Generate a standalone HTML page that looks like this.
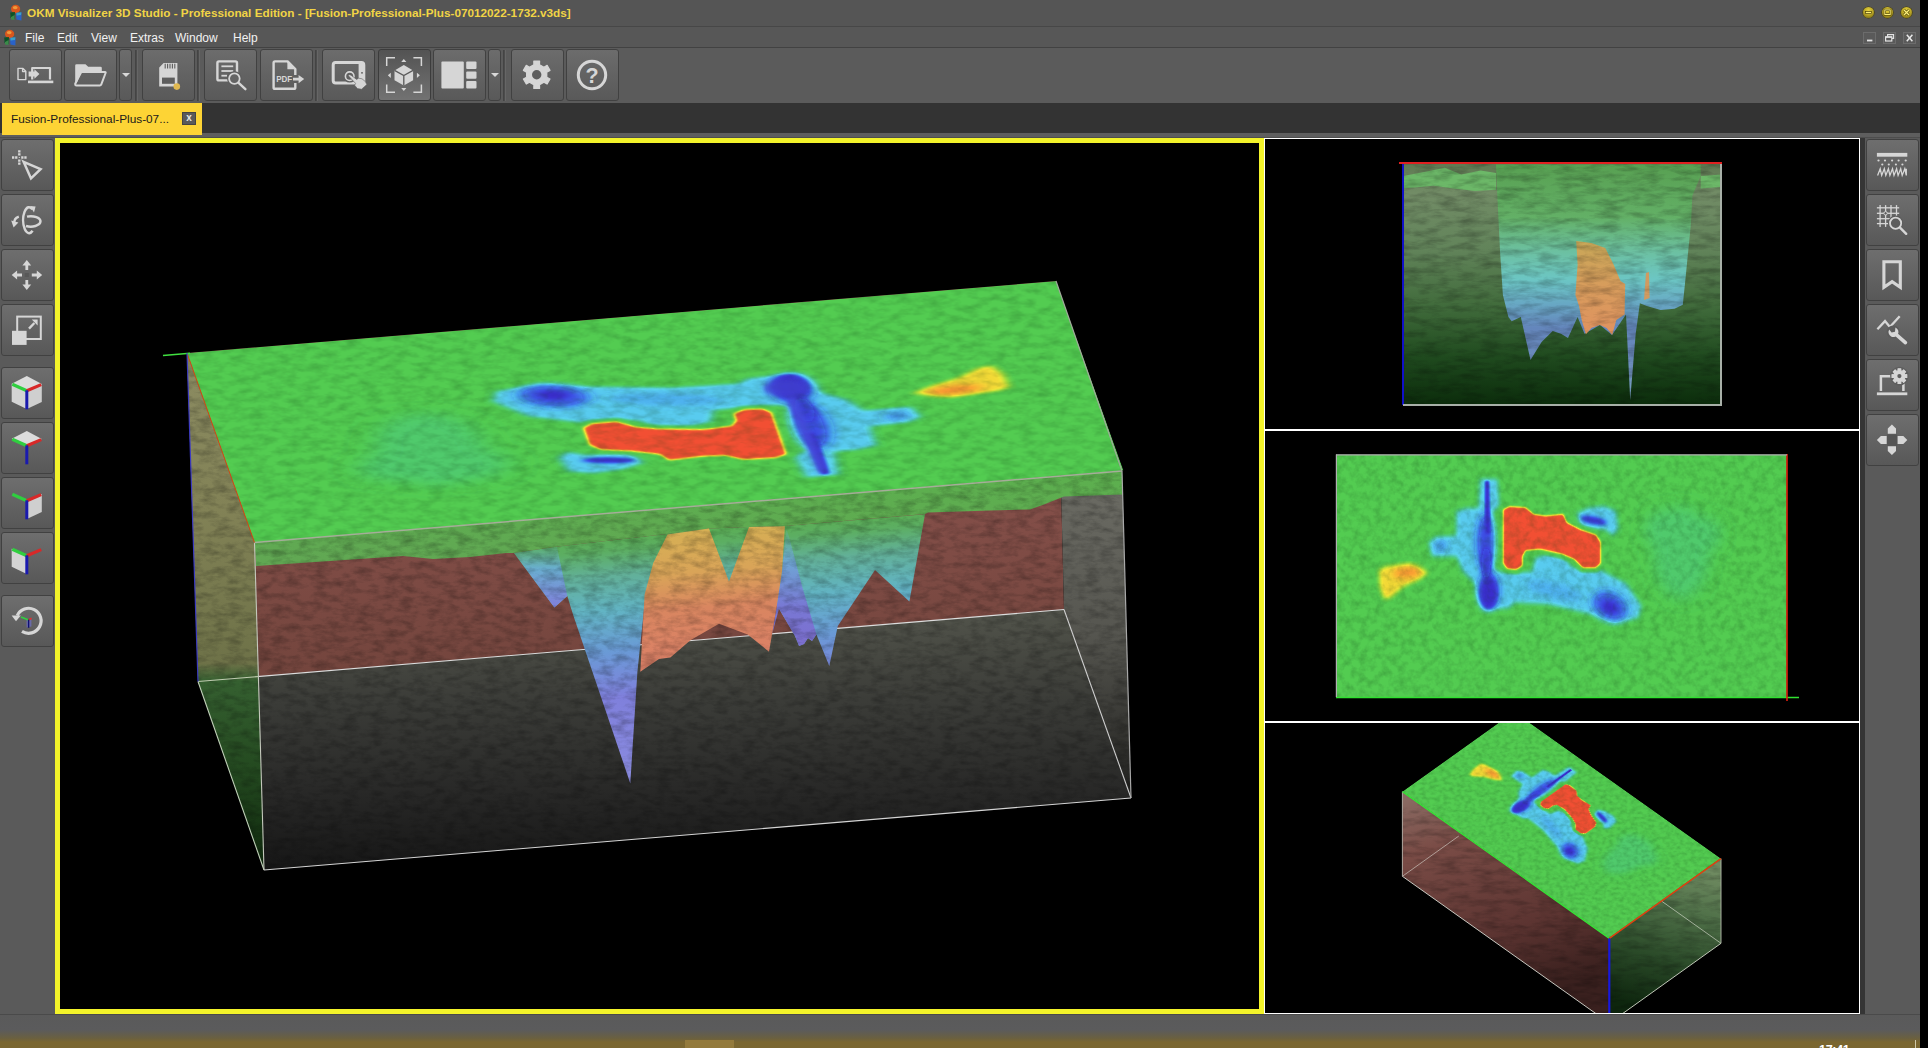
<!DOCTYPE html>
<html lang="en">
<head>
<meta charset="utf-8">
<title>OKM Visualizer 3D Studio - Professional Edition</title>
<style>
*{box-sizing:border-box;margin:0;padding:0}
html,body{width:1928px;height:1048px;overflow:hidden;background:#000}
body{position:relative;font-family:"Liberation Sans","DejaVu Sans",sans-serif;font-size:12px;color:#eee}
.abs{position:absolute}
#app{position:absolute;left:0;top:0;width:1920px;height:1048px;background:#5a5a5a;overflow:hidden}
#titlebar{left:0;top:0;width:1920px;height:27px;background:#555;border-bottom:1px solid #474747}
#title{left:27px;top:6px;font-weight:bold;font-size:11.75px;color:#f1d445;white-space:nowrap;letter-spacing:0px}
#menubar{left:0;top:27px;width:1920px;height:21px;background:#575757;border-bottom:1px solid #424242}
.menu{position:absolute;top:4px;font-size:12px;color:#f2f2f2;white-space:nowrap}
#toolbar{left:0;top:48px;width:1920px;height:55px;background:#5b5b5b}
.tb{position:absolute;top:1px;width:53px;height:52px;border:1px solid #414141;border-radius:3px;background:linear-gradient(#6c6c6c,#595959)}
.tb.on{background:linear-gradient(#535353,#727272);border-color:#3c3c3c}
.dd{position:absolute;top:1px;width:13px;height:52px;border:1px solid #414141;border-radius:3px;background:linear-gradient(#6c6c6c,#595959)}
.dd:after{content:"";position:absolute;left:2px;top:23px;border:4px solid transparent;border-top:4.5px solid #d8d8d8}
.sep{position:absolute;top:2px;width:3px;height:51px;background:#4c4c4c;border-left:1px solid #444;border-right:1px solid #666}
.tb svg,.sb svg{position:absolute;left:0;top:0}
#tabbar{left:0;top:103px;width:1920px;height:30px;background:#333}
#tab{left:2px;top:103px;width:200px;height:32px;background:#fdd435;color:#1a1a1a;font-size:11.8px}
#tab span{position:absolute;left:9px;top:9px;white-space:nowrap}
#tabx{left:182px;top:112px;width:14px;height:13px;background:#5a5a5a;border:1px solid #444;color:#e8e8e8;font-size:10px;font-weight:bold;line-height:10px;text-align:center}
#tabline{left:0;top:133px;width:1920px;height:5px;background:linear-gradient(#5e5e5e 0,#5e5e5e 70%,#454545 100%)}
#leftbar{left:0;top:138px;width:55px;height:876px;background:#5a5a5a}
#rightbar{left:1860px;top:138px;width:60px;height:876px;background:#5a5a5a;border-left:5px solid #353535}
.sb{position:absolute;width:53px;height:52px;border:1px solid #414141;border-radius:3px;background:linear-gradient(#6e6e6e,#585858)}
#status{left:0;top:1014px;width:1920px;height:34px;background:linear-gradient(#5a5a5a 0,#5b5b5c 45%,#6a6040 70%,#7a6630 82%,#7a6630 100%);border-top:1px solid #4a4a4a}
#clock{left:1819px;top:1043px;color:#fff;font-size:12.5px;font-weight:bold;letter-spacing:-0.3px}
#tbtn{left:685px;top:1040px;width:49px;height:8px;background:#937a3c}
.wbtn{position:absolute;top:7px;width:11px;height:11px;border-radius:50%;background:radial-gradient(circle at 50% 30%,#e6d23c 0,#b8a424 50%,#6a5c0e 100%);box-shadow:0 0 0 0.6px #4a4008}
.wbtn svg,.mbtn svg{position:absolute;left:0;top:0}
.mbtn{position:absolute;top:5px;width:13px;height:12px;border:1px solid #6c6c6c;background:#5a5a5a;color:#e6e6e6;font-size:9px;font-weight:bold;text-align:center;line-height:10px}
#views{left:0;top:0}
</style>
</head>
<body>
<div id="app">
<div id="titlebar" class="abs">
  <svg class="abs" style="left:8px;top:4px" width="16" height="18" viewBox="0 0 16 18"><defs><filter id="ib1"><feGaussianBlur stdDeviation="0.45"/></filter></defs><g filter="url(#ib1)"><ellipse cx="7.6" cy="5" rx="4.6" ry="4.2" fill="#d8561f"/><ellipse cx="7.2" cy="3.6" rx="2.4" ry="1.7" fill="#f09a3a"/><path d="M2.2 8.5 L7 8 L6.4 15 L2.6 14 Z" fill="#0d5226"/><path d="M3 13 L6.6 11 L6.4 16 L3 15.6Z" fill="#3a8a4a"/><path d="M8 9 L13.6 8.4 L13.4 16.4 L8.4 15.6 Z" fill="#2a62c8"/><path d="M8.4 8.8 L13.4 8.2 L13 11 L8.6 11.6Z" fill="#3aa0c8"/></g></svg>
  <div id="title" class="abs">OKM Visualizer 3D Studio - Professional Edition - [Fusion-Professional-Plus-07012022-1732.v3ds]</div>
  <div class="wbtn" style="left:1863px"><svg width="11" height="11" viewBox="0 0 11 11"><rect x="2.4" y="4.6" width="6.2" height="2" fill="#fff27a" stroke="#4e4408" stroke-width="0.7"/></svg></div>
  <div class="wbtn" style="left:1882px"><svg width="11" height="11" viewBox="0 0 11 11"><rect x="2.8" y="2.9" width="5.4" height="4.6" fill="none" stroke="#4e4408" stroke-width="2.2"/><rect x="2.8" y="2.9" width="5.4" height="4.6" fill="none" stroke="#fff27a" stroke-width="1"/></svg></div>
  <div class="wbtn" style="left:1901px"><svg width="11" height="11" viewBox="0 0 11 11"><path d="M3 3 L8 8 M8 3 L3 8" stroke="#4e4408" stroke-width="2.6"/><path d="M3 3 L8 8 M8 3 L3 8" stroke="#fff27a" stroke-width="1.3"/></svg></div>
</div>
<div id="menubar" class="abs">
  <svg class="abs" style="left:2px;top:2px" width="16" height="18" viewBox="0 0 16 18"><defs><filter id="ib2"><feGaussianBlur stdDeviation="0.45"/></filter></defs><g filter="url(#ib2)"><ellipse cx="7.6" cy="5" rx="4.6" ry="4.2" fill="#d8561f"/><ellipse cx="7.2" cy="3.6" rx="2.4" ry="1.7" fill="#f09a3a"/><path d="M2.2 8.5 L7 8 L6.4 15 L2.6 14 Z" fill="#0d5226"/><path d="M3 13 L6.6 11 L6.4 16 L3 15.6Z" fill="#3a8a4a"/><path d="M8 9 L13.6 8.4 L13.4 16.4 L8.4 15.6 Z" fill="#2a62c8"/><path d="M8.4 8.8 L13.4 8.2 L13 11 L8.6 11.6Z" fill="#3aa0c8"/></g></svg>
  <div class="menu" style="left:25px">File</div>
  <div class="menu" style="left:57px">Edit</div>
  <div class="menu" style="left:91px">View</div>
  <div class="menu" style="left:130px">Extras</div>
  <div class="menu" style="left:175px">Window</div>
  <div class="menu" style="left:233px">Help</div>
  <div class="mbtn" style="left:1863px"><svg width="11" height="10" viewBox="0 0 11 10"><rect x="3" y="6.6" width="5.4" height="1.8" fill="#e4e4e4"/></svg></div>
  <div class="mbtn" style="left:1883px"><svg width="11" height="10" viewBox="0 0 11 10"><path d="M3.6 3.4 V1.6 H9.6 V5.4 H8" fill="none" stroke="#e4e4e4" stroke-width="1.1"/><rect x="1.6" y="3.8" width="6.2" height="4.2" fill="none" stroke="#e4e4e4" stroke-width="1.2"/><rect x="1.6" y="3.6" width="6.2" height="1.2" fill="#e4e4e4"/></svg></div>
  <div class="mbtn" style="left:1903px"><svg width="11" height="10" viewBox="0 0 11 10"><path d="M2.8 1.8 L8.4 8.2 M8.4 1.8 L2.8 8.2" stroke="#e8e8e8" stroke-width="1.5"/></svg></div>
</div>
<div id="toolbar" class="abs">
  <div class="tb" style="left:9px"><svg style="left:-1px;top:-1px" width="53" height="53" viewBox="0 0 53 53"><g fill="none" stroke="#d6d6d6" stroke-width="1.4" stroke-linejoin="round">
<path d="M9 19.4 H14 L16.8 22.2 V30.6 H9 Z M13.6 19.6 V22.6 H16.6"/>
<path d="M23.2 30.6 V19 H41 V30.6" stroke-width="2.2"/>
</g><rect x="19" y="31.6" width="25.3" height="2.6" fill="#d6d6d6"/>
<path d="M19.6 22.4 H25.4 V20.3 L30.4 25 L25.4 29.7 V27.6 H19.6 Z" fill="#d6d6d6"/></svg></div>
  <div class="tb" style="left:64px"><svg style="left:-1px;top:-1px" width="53" height="53" viewBox="0 0 53 53"><path d="M11.2 16.5 Q11.2 15.2 12.5 15.2 H21.5 L24.2 17.7 H36.5 Q37.8 17.7 37.8 19 V22.6 H17.6 L12.6 34.6 H11.2 Z" fill="#d6d6d6"/>
<path d="M17.3 23 H41 Q42 23 41.6 24 L37.3 35.4 Q36.9 36.4 35.8 36.4 H12.4 Q11.2 36.4 11.2 35.2 L11.2 34.6 Z" fill="none" stroke="#d6d6d6" stroke-width="2" stroke-linejoin="round"/></svg></div>
  <div class="dd" style="left:119px"></div>
  <div class="sep" style="left:135px"></div>
  <div class="tb" style="left:142px"><svg style="left:-1px;top:-1px" width="53" height="53" viewBox="0 0 53 53"><path d="M21.6 14 H35.4 V37.6 H17.2 V18.4 Z" fill="#d6d6d6"/>
<g stroke="#5c5c5c" stroke-width="1.1"><line x1="23.2" y1="14.8" x2="23.2" y2="19.6"/><line x1="25.6" y1="14.8" x2="25.6" y2="19.6"/><line x1="28" y1="14.8" x2="28" y2="19.6"/><line x1="30.4" y1="14.8" x2="30.4" y2="19.6"/><line x1="32.8" y1="14.8" x2="32.8" y2="19.6"/></g>
<rect x="20" y="28.6" width="12.8" height="6.2" fill="#5e5e5e"/>
<circle cx="34.8" cy="37.6" r="3.3" fill="#e0b850"/></svg></div>
  <div class="sep" style="left:197px"></div>
  <div class="tb" style="left:204px"><svg style="left:-1px;top:-1px" width="53" height="53" viewBox="0 0 53 53"><rect x="13.4" y="12.4" width="19.6" height="19" rx="1.5" fill="none" stroke="#d6d6d6" stroke-width="2.4"/>
<g stroke="#d6d6d6" stroke-width="1.8"><line x1="17.4" y1="17.3" x2="29.2" y2="17.3"/><line x1="17.4" y1="22" x2="29.2" y2="22"/><line x1="17.4" y1="26.7" x2="23" y2="26.7"/></g>
<circle cx="30.4" cy="29.6" r="7.4" fill="#5e5e5e"/>
<circle cx="30.4" cy="29.6" r="5.3" fill="#646464" stroke="#d6d6d6" stroke-width="1.8"/>
<line x1="34.6" y1="33.8" x2="41.4" y2="40.2" stroke="#d6d6d6" stroke-width="2.4" stroke-linecap="round"/></svg></div>
  <div class="tb" style="left:260px"><svg style="left:-1px;top:-1px" width="53" height="53" viewBox="0 0 53 53"><path d="M35.3 26 V20 L27.6 12.4 H15 Q13.6 12.4 13.6 13.8 V38.4 Q13.6 39.8 15 39.8 H33.9 Q35.3 39.8 35.3 38.4 V34" fill="none" stroke="#d6d6d6" stroke-width="2.4" stroke-linejoin="round"/>
<path d="M27.4 12.6 V20.2 H35.2 Z" fill="#d6d6d6"/>
<text x="16.2" y="32.9" font-family="Liberation Sans,sans-serif" font-weight="bold" font-size="8.2" fill="#d6d6d6" textLength="16" lengthAdjust="spacingAndGlyphs">PDF</text>
<path d="M33 28.7 H38.6 V26 L44.2 30 L38.6 34.2 V31.4 H33 Z" fill="#d6d6d6"/></svg></div>
  <div class="sep" style="left:315px"></div>
  <div class="tb" style="left:322px"><svg style="left:-1px;top:-1px" width="53" height="53" viewBox="0 0 53 53"><rect x="11.2" y="13.6" width="30.6" height="20.4" rx="2.4" fill="none" stroke="#d6d6d6" stroke-width="3"/>
<rect x="36.6" y="13.6" width="4.6" height="20.4" fill="#d6d6d6"/><circle cx="40" cy="23.8" r="0.9" fill="#555"/>
<circle cx="27.7" cy="27.2" r="6.3" fill="#606060"/>
<circle cx="27.7" cy="27.2" r="4.3" fill="none" stroke="#d6d6d6" stroke-width="1.6"/>
<path d="M26.2 26.6 Q27.4 25 29 26.2 L34.6 30.4 L36.6 29.2 L40 29.8 L43.4 32.6 L44.8 35.6 L39.6 40.2 L35.4 39.6 L32.6 36.2 L33.6 34.4 Z" fill="#d6d6d6" stroke="#606060" stroke-width="0.6"/></svg></div>
  <div class="tb on" style="left:378px"><svg style="left:-1px;top:-1px" width="53" height="53" viewBox="0 0 53 53"><g fill="none" stroke="#d6d6d6" stroke-width="1.5"><path d="M8.7 17 V8.7 H17"/><path d="M35.4 8.7 H43.4 V17"/><path d="M8.7 35.4 V43.3 H17"/><path d="M35.4 43.3 H43.4 V35.4"/></g>
<path d="M25.8 16 L35.1 21.4 V31.2 L25.8 36.5 L16.5 31.2 V21.4 Z" fill="#d6d6d6"/>
<path d="M16.5 21.4 L25.8 26.6 L35.1 21.4 M25.8 26.6 V36.5" fill="none" stroke="#5a5a5a" stroke-width="1.3"/>
<path d="M25.8 10 L28.4 13 H23.2 Z M25.8 42 L28.4 39 H23.2 Z M9.8 26.3 L12.8 23.7 V28.9 Z M41.9 26.3 L38.9 23.7 V28.9 Z" fill="#d6d6d6"/></svg></div>
  <div class="tb" style="left:433px"><svg style="left:-1px;top:-1px" width="53" height="53" viewBox="0 0 53 53"><rect x="8.4" y="12.6" width="22.4" height="26.8" rx="1" fill="#d6d6d6"/><rect x="33.2" y="12.6" width="10.3" height="7.3" rx="1" fill="#d6d6d6"/><rect x="33.2" y="22.4" width="10.3" height="7.3" rx="1" fill="#d6d6d6"/><rect x="33.2" y="32.1" width="10.3" height="7.3" rx="1" fill="#d6d6d6"/></svg></div>
  <div class="dd" style="left:488px"></div>
  <div class="sep" style="left:503px"></div>
  <div class="tb" style="left:511px"><svg style="left:-1px;top:-1px" width="53" height="53" viewBox="0 0 53 53"><path d="M22.88 15.69 L22.80 12.00 L28.60 12.00 L28.52 15.69 L32.96 18.25 L36.11 16.34 L39.01 21.37 L35.78 23.14 L35.78 28.26 L39.01 30.03 L36.11 35.06 L32.96 33.15 L28.52 35.71 L28.60 39.40 L22.80 39.40 L22.88 35.71 L18.44 33.15 L15.29 35.06 L12.39 30.03 L15.62 28.26 L15.62 23.14 L12.39 21.37 L15.29 16.34 L18.44 18.25Z" fill="#d6d6d6" stroke="#d6d6d6" stroke-width="1.2" stroke-linejoin="round"/><circle cx="25.7" cy="25.7" r="10.1" fill="#d6d6d6"/><circle cx="25.7" cy="25.7" r="4.7" fill="#5e5e5e"/></svg></div>
  <div class="tb" style="left:566px"><svg style="left:-1px;top:-1px" width="53" height="53" viewBox="0 0 53 53"><circle cx="26" cy="26" r="13.7" fill="none" stroke="#d6d6d6" stroke-width="3"/>
<text x="26" y="34" text-anchor="middle" font-family="Liberation Sans,sans-serif" font-weight="bold" font-size="21.5" fill="#d6d6d6">?</text></svg></div>
</div>
<div id="tabbar" class="abs"></div>
<div id="tabline" class="abs"></div>
<div id="tab" class="abs"><span>Fusion-Professional-Plus-07...</span></div>
<div id="tabx" class="abs">x</div>
<div id="leftbar" class="abs">
  <div class="sb" style="left:1px;top:1px"><svg style="left:-1px;top:-1px" width="53" height="53" viewBox="0 0 53 53"><g stroke="#d6d6d6" stroke-width="2.4" stroke-dasharray="2.3 0.8"><line x1="11" y1="18.5" x2="16.4" y2="18.5"/><line x1="20.2" y1="18.5" x2="25.6" y2="18.5"/><line x1="18.3" y1="11.2" x2="18.3" y2="16.6"/><line x1="18.3" y1="20.4" x2="18.3" y2="25.8"/></g>
<rect x="17.8" y="18" width="1" height="1" fill="#d6d6d6"/>
<path d="M22.6 22.8 L39.6 30.2 L30 39.4 Z" fill="none" stroke="#d6d6d6" stroke-width="2.5" stroke-linejoin="miter"/></svg></div>
  <div class="sb" style="left:1px;top:56px"><svg style="left:-1px;top:-1px" width="53" height="53" viewBox="0 0 53 53"><g fill="none" stroke="#d6d6d6" stroke-width="2.5">
<path d="M31.5 15.4 A6 13 0 1 0 31.6 36.8"/>
<path d="M26 22.6 A9.8 5.2 0 1 1 25 32"/>
<path d="M13.4 29.6 Q12.6 24.4 17.8 22.6" stroke-width="2.3"/>
</g>
<path d="M29 12 L34.6 12.6 L33 18.4 Z" fill="#d6d6d6"/>
<path d="M10.2 26.6 L17.4 28.6 L12.6 33.4 Z" fill="#d6d6d6"/></svg></div>
  <div class="sb" style="left:1px;top:111px"><svg style="left:-1px;top:-1px" width="53" height="53" viewBox="0 0 53 53"><g fill="#d6d6d6"><path d="M25.8 11 L30.2 16.4 H27.2 V21 H24.4 V16.4 H21.4 Z"/><path d="M25.8 41 L30.2 35.6 H27.2 V31 H24.4 V35.6 H21.4 Z"/><path d="M10.7 26 L16.1 21.6 V24.6 H21 V27.4 H16.1 V30.4 Z"/><path d="M41.2 26 L35.8 21.6 V24.6 H30.8 V27.4 H35.8 V30.4 Z"/></g>
<rect x="23.8" y="24" width="4" height="4" fill="#585858"/></svg></div>
  <div class="sb" style="left:1px;top:166px"><svg style="left:-1px;top:-1px" width="53" height="53" viewBox="0 0 53 53"><rect x="16.2" y="12.6" width="23.6" height="22.4" fill="none" stroke="#d6d6d6" stroke-width="2"/>
<rect x="11" y="26.8" width="14.6" height="14.1" fill="#d6d6d6"/>
<path d="M28 24.6 L33.4 19" stroke="#d6d6d6" stroke-width="2.4"/><path d="M30.8 15.6 H36.6 V21.4 Z" fill="#d6d6d6"/></svg></div>
  <div class="sb" style="left:1px;top:229px"><svg style="left:-1px;top:-1px" width="53" height="53" viewBox="0 0 53 53"><path d="M25.8 9.1 L40.8 17.0 L25.8 23.8 L10.7 16.7 Z" fill="#dcdcdc"/><path d="M10.7 16.7 L25.8 23.8 L25.8 41.9 L10.7 34.8 Z" fill="#d4d4d4"/><path d="M40.8 17.0 L25.8 23.8 L25.8 41.9 L40.8 35.1 Z" fill="#cfcfcf"/><line x1="11.299999999999999" y1="17.3" x2="25.8" y2="23.8" stroke="#2fcf3f" stroke-width="3.2"/><line x1="40.199999999999996" y1="17.6" x2="25.8" y2="23.8" stroke="#d82828" stroke-width="3.2"/><line x1="25.8" y1="23.3" x2="25.8" y2="42.3" stroke="#1a1aae" stroke-width="3"/></svg></div>
  <div class="sb" style="left:1px;top:284px"><svg style="left:-1px;top:-1px" width="53" height="53" viewBox="0 0 53 53"><path d="M25.8 9.1 L40.8 17.0 L25.8 23.8 L10.7 16.7 Z" fill="#dcdcdc"/><line x1="11.299999999999999" y1="17.3" x2="25.8" y2="23.8" stroke="#2fcf3f" stroke-width="3.2"/><line x1="40.199999999999996" y1="17.6" x2="25.8" y2="23.8" stroke="#d82828" stroke-width="3.2"/><line x1="25.8" y1="23.3" x2="25.8" y2="42.3" stroke="#1a1aae" stroke-width="3"/></svg></div>
  <div class="sb" style="left:1px;top:339px"><svg style="left:-1px;top:-1px" width="53" height="53" viewBox="0 0 53 53"><path d="M40.8 17.0 L25.8 23.8 L25.8 41.9 L40.8 35.1 Z" fill="#cfcfcf"/><line x1="11.299999999999999" y1="17.3" x2="25.8" y2="23.8" stroke="#2fcf3f" stroke-width="3.2"/><line x1="40.199999999999996" y1="17.6" x2="25.8" y2="23.8" stroke="#d82828" stroke-width="3.2"/><line x1="25.8" y1="23.3" x2="25.8" y2="42.3" stroke="#1a1aae" stroke-width="3"/></svg></div>
  <div class="sb" style="left:1px;top:394px"><svg style="left:-1px;top:-1px" width="53" height="53" viewBox="0 0 53 53"><path d="M10.7 16.7 L25.8 23.8 L25.8 41.9 L10.7 34.8 Z" fill="#d4d4d4"/><line x1="11.299999999999999" y1="17.3" x2="25.8" y2="23.8" stroke="#2fcf3f" stroke-width="3.2"/><line x1="40.199999999999996" y1="17.6" x2="25.8" y2="23.8" stroke="#d82828" stroke-width="3.2"/><line x1="25.8" y1="23.3" x2="25.8" y2="42.3" stroke="#1a1aae" stroke-width="3"/></svg></div>
  <div class="sb" style="left:1px;top:457px"><svg style="left:-1px;top:-1px" width="53" height="53" viewBox="0 0 53 53"><path d="M16.2 20.6 A12.5 12.5 0 1 1 21 36.4" fill="none" stroke="#d6d6d6" stroke-width="3.2"/>
<path d="M10.6 20.6 H19.8 L15 26.2 Z" fill="#d6d6d6"/>
<path d="M25.6 24.6 L30.4 23.4 V31.6 L25.6 32.6 Z" fill="#6a6aa8"/>
<line x1="20" y1="22" x2="27.6" y2="25" stroke="#30d040" stroke-width="1.8"/><line x1="27.6" y1="25" x2="30.6" y2="23.2" stroke="#e03030" stroke-width="1.6"/><line x1="27.6" y1="24.6" x2="27.6" y2="32.8" stroke="#101070" stroke-width="1.4"/></svg></div>
</div>
<div id="rightbar" class="abs">
  <div class="sb" style="left:1px;top:1px"><svg style="left:-1px;top:-1px" width="53" height="53" viewBox="0 0 53 53"><rect x="10.9" y="13.9" width="30.4" height="3.8" fill="#d6d6d6"/><circle cx="12.5" cy="21.5" r="1.1" fill="#d6d6d6"/><circle cx="19" cy="21.5" r="1.1" fill="#d6d6d6"/><circle cx="26.1" cy="21.5" r="1.1" fill="#d6d6d6"/><circle cx="32.6" cy="21.5" r="1.1" fill="#d6d6d6"/><circle cx="39.7" cy="21.5" r="1.1" fill="#d6d6d6"/><circle cx="16.3" cy="25.5" r="1.1" fill="#d6d6d6"/><circle cx="22.8" cy="25.5" r="1.1" fill="#d6d6d6"/><circle cx="29.9" cy="25.5" r="1.1" fill="#d6d6d6"/><circle cx="36.4" cy="25.5" r="1.1" fill="#d6d6d6"/><path d="M11.6 36.4 L14.2 29.8 L15.7 36.4 L18.3 29.8 L19.8 36.4 L22.4 29.8 L23.9 36.4 L26.5 29.8 L28.0 36.4 L30.6 29.8 L32.1 36.4 L34.7 29.8 L36.2 36.4 L38.8 29.8 L40.3 36.4 V29.8" fill="none" stroke="#d6d6d6" stroke-width="1.3" stroke-linejoin="miter"/></svg></div>
  <div class="sb" style="left:1px;top:56px"><svg style="left:-1px;top:-1px" width="53" height="53" viewBox="0 0 53 53"><g stroke="#d6d6d6" stroke-width="1.3"><line x1="14.1" y1="11.1" x2="14.1" y2="32.9"/><line x1="19.6" y1="11.1" x2="19.6" y2="32.9"/><line x1="25" y1="11.1" x2="25" y2="32.9"/><line x1="30.5" y1="11.1" x2="30.5" y2="32.9"/><line x1="10.9" y1="13.8" x2="33.2" y2="13.8"/><line x1="10.9" y1="19.3" x2="33.2" y2="19.3"/><line x1="10.9" y1="24.7" x2="33.2" y2="24.7"/><line x1="10.9" y1="29.6" x2="33.2" y2="29.6"/></g><circle cx="19.6" cy="19.3" r="1.7" fill="#5e5e5e" stroke="#d6d6d6" stroke-width="1"/><circle cx="29.6" cy="29.2" r="7.6" fill="#5c5c5c"/><circle cx="29.6" cy="29.2" r="5.6" fill="none" stroke="#d6d6d6" stroke-width="1.8"/><line x1="34" y1="33.6" x2="40.2" y2="39.8" stroke="#d6d6d6" stroke-width="2.4" stroke-linecap="round"/></svg></div>
  <div class="sb" style="left:1px;top:111px"><svg style="left:-1px;top:-1px" width="53" height="53" viewBox="0 0 53 53"><path d="M17.9 12.7 H34.3 V38.2 L26.1 32.6 L17.9 38.2 Z" fill="none" stroke="#d6d6d6" stroke-width="3.1" stroke-linejoin="miter"/></svg></div>
  <div class="sb" style="left:1px;top:166px"><svg style="left:-1px;top:-1px" width="53" height="53" viewBox="0 0 53 53"><path d="M11.4 25.2 L19 17.1 L23.9 23.1 L33.7 12.2" fill="none" stroke="#d6d6d6" stroke-width="2.3"/>
<circle cx="27.2" cy="28" r="6.6" fill="#5c5c5c"/>
<path d="M23.2 25.4 A5 5 0 1 0 29.4 23.4 L29 27.8 L25.6 28.6 Z" fill="#d6d6d6"/>
<line x1="30" y1="30.4" x2="39.4" y2="38.6" stroke="#d6d6d6" stroke-width="3.6" stroke-linecap="round"/></svg></div>
  <div class="sb" style="left:1px;top:221px"><svg style="left:-1px;top:-1px" width="53" height="53" viewBox="0 0 53 53"><path d="M14.9 32 V17.2 H37.4 V32" fill="none" stroke="#d6d6d6" stroke-width="2.5"/><rect x="10.9" y="33.4" width="30.4" height="2.8" fill="#d6d6d6"/>
<circle cx="33.4" cy="17.1" r="9.3" fill="#5e5e5e"/><path d="M32.06 11.76 L32.01 9.73 L34.79 9.73 L34.74 11.76 L36.23 12.38 L37.63 10.91 L39.59 12.87 L38.12 14.27 L38.74 15.76 L40.77 15.71 L40.77 18.49 L38.74 18.44 L38.12 19.93 L39.59 21.33 L37.63 23.29 L36.23 21.82 L34.74 22.44 L34.79 24.47 L32.01 24.47 L32.06 22.44 L30.57 21.82 L29.17 23.29 L27.21 21.33 L28.68 19.93 L28.06 18.44 L26.03 18.49 L26.03 15.71 L28.06 15.76 L28.68 14.27 L27.21 12.87 L29.17 10.91 L30.57 12.38Z" fill="#d6d6d6" stroke="#d6d6d6" stroke-width="1.2" stroke-linejoin="round"/><circle cx="33.4" cy="17.1" r="5.2" fill="#d6d6d6"/><circle cx="33.4" cy="17.1" r="2.1" fill="#5e5e5e"/></svg></div>
  <div class="sb" style="left:1px;top:276px"><svg style="left:-1px;top:-1px" width="53" height="53" viewBox="0 0 53 53"><g fill="#d6d6d6"><path d="M25.9 10.6 L30 14.6 V19.8 H21.8 V14.6 Z"/><path d="M25.9 41 L30 37 V32.3 H21.8 V37 Z"/><path d="M10.9 26 L14.9 21.9 H20.7 V30.1 H14.9 Z"/><path d="M41.3 26 L37.3 21.9 H31.5 V30.1 H37.3 Z"/></g><rect x="21" y="20.4" width="10.2" height="11.4" fill="#555"/></svg></div>
</div>
<div id="status" class="abs"></div>
<div id="tbtn" class="abs"></div>
<div id="clock" class="abs">17:41</div>
<div class="abs" style="left:1915px;top:1040px;width:1px;height:8px;background:#cfc8a8"></div>
<svg id="views" class="abs" width="1928" height="1048" viewBox="0 0 1928 1048">
<defs>

<filter id="b1" x="-20%" y="-20%" width="140%" height="140%"><feGaussianBlur stdDeviation="1.1"/></filter>
<filter id="b2" x="-20%" y="-20%" width="140%" height="140%"><feGaussianBlur stdDeviation="2.2"/></filter>
<filter id="b3" x="-30%" y="-30%" width="160%" height="160%"><feGaussianBlur stdDeviation="3.5"/></filter>
<filter id="b6" x="-40%" y="-40%" width="180%" height="180%"><feGaussianBlur stdDeviation="7"/></filter>
<filter id="jet" x="0" y="0" width="100%" height="100%" color-interpolation-filters="sRGB">
 <feComponentTransfer in="SourceGraphic" result="c">
  <feFuncR type="table" tableValues="0.23 0.24 0.27 0.36 0.31 0.32 0.60 0.95 0.98 0.96 0.95"/>
  <feFuncG type="table" tableValues="0.18 0.32 0.60 0.83 0.79 0.80 0.86 0.90 0.68 0.38 0.31"/>
  <feFuncB type="table" tableValues="0.80 0.90 0.94 0.94 0.58 0.32 0.25 0.22 0.20 0.20 0.20"/>
 </feComponentTransfer>
 <feTurbulence type="fractalNoise" baseFrequency="0.13" numOctaves="3" seed="7" result="n"/>
 <feColorMatrix in="n" type="matrix" values="0 0 0 0 0  0 0 0 0 0  0 0 0 0 0  0.45 0 0 0 -0.17" result="na"/>
 <feFlood flood-color="#0a3a10"/><feComposite in2="na" operator="in" result="dark"/>
 <feComposite in="dark" in2="c" operator="over"/>
</filter>
<g id="mapfield">
 <rect x="0" y="0" width="450.4" height="243" fill="#808080"/>
<g filter="url(#b6)" fill="#747474"><ellipse cx="345" cy="98" rx="28" ry="46"/><ellipse cx="330" cy="75" rx="22" ry="20"/><ellipse cx="365" cy="80" rx="20" ry="18"/></g>
<g filter="url(#b2)" fill="#4a4a4a"><path d="M143.8 24.3 L161.0 24.3 L163.0 50.1 L159.3 55.2 L156.2 56.9 L156.2 111.9 L161.0 117.4 L195.3 117.4 L198.8 103.3 L212.5 99.0 L229.7 104.1 L234.8 111.9 L246.9 115.3 L264.0 115.3 L289.8 129.0 L305.2 151.4 L301.8 163.4 L277.8 168.5 L255.4 160.0 L212.5 149.7 L178.2 147.9 L173.0 153.4 L147.2 155.2 L142.1 146.2 L138.7 129.0 L126.6 117.0 L119.8 101.6 L95.7 101.6 L92.3 87.8 L99.2 82.7 L119.8 81.0 L119.8 56.9 L130.1 53.5 L142.1 53.5Z"/><path d="M240.3 59.0 L252.0 53.1 L267.5 51.4 L279.5 56.1 L282.1 74.1 L276.9 81.0 L268.3 75.0 L245.1 72.7Z"/></g>
<g filter="url(#b3)" fill="#212121"><ellipse cx="149.3" cy="87.8" rx="8.9" ry="29.2" transform="rotate(0 149.3 87.8)" fill="#141414"/><ellipse cx="104.3" cy="91.3" rx="5.2" ry="5.2" transform="rotate(0 104.3 91.3)" fill="#2b2b2b"/><ellipse cx="217.7" cy="135.9" rx="29.2" ry="7.7" transform="rotate(15 217.7 135.9)" fill="#3d3d3d"/><ellipse cx="273.5" cy="151.4" rx="18.9" ry="13.7" transform="rotate(30 273.5 151.4)" fill="#1f1f1f"/><ellipse cx="152.4" cy="135.9" rx="10.3" ry="18.9" transform="rotate(0 152.4 135.9)" fill="#141414"/></g>
<g filter="url(#b1)" fill="#000000"><path d="M148.8 26.4 L152.6 26.4 L153.4 56.9 L153.4 79.2 L149.3 79.2 L148.6 56.9Z"/></g>
<g filter="url(#b2)" fill="#000000"><ellipse cx="152.4" cy="138.5" rx="8.2" ry="15.8" transform="rotate(0 152.4 138.5)"/><ellipse cx="273.5" cy="152.7" rx="7.9" ry="5.8" transform="rotate(25 273.5 152.7)"/><ellipse cx="257.2" cy="65.8" rx="13.7" ry="3.4" transform="rotate(12 257.2 65.8)"/><ellipse cx="149.8" cy="108.4" rx="4.8" ry="15.5" transform="rotate(0 149.8 108.4)" fill="#080808"/></g>
<g filter="url(#b1)"><path d="M167.9 55.5 L173.0 53.0 L188.5 53.8 L197.1 60.7 L209.1 62.4 L226.2 60.7 L229.7 68.9 L243.4 75.8 L258.9 81.0 L263.2 87.8 L263.2 108.4 L258.9 112.2 L246.9 112.2 L238.3 103.6 L226.2 98.5 L203.9 93.3 L188.5 95.0 L185.0 101.6 L185.0 110.5 L179.9 113.9 L171.3 113.1 L167.9 108.4Z" fill="#808080" stroke="#808080" stroke-width="11" stroke-linejoin="round"/></g>
<g filter="url(#b1)"><path d="M167.9 55.5 L173.0 53.0 L188.5 53.8 L197.1 60.7 L209.1 62.4 L226.2 60.7 L229.7 68.9 L243.4 75.8 L258.9 81.0 L263.2 87.8 L263.2 108.4 L258.9 112.2 L246.9 112.2 L238.3 103.6 L226.2 98.5 L203.9 93.3 L188.5 95.0 L185.0 101.6 L185.0 110.5 L179.9 113.9 L171.3 113.1 L167.9 108.4Z" fill="#ffffff" stroke="#ffffff" stroke-width="1.5" stroke-linejoin="round"/></g>
<g filter="url(#b2)"><path d="M42.5 115.3 L49.4 111.9 L73.4 109.3 L82.0 113.6 L92.3 117.9 L80.3 125.6 L66.5 132.5 L54.5 142.8 L47.6 144.5 L43.3 132.5Z" fill="#b8b8b8"/></g>
<g filter="url(#b3)" fill="#d6d6d6"><ellipse cx="70.8" cy="117.9" rx="14.6" ry="5.5" transform="rotate(-5 70.8 117.9)"/></g>
</g>
<g id="map" filter="url(#jet)"><use href="#mapfield"/></g>

<clipPath id="cpMain"><rect x="60" y="143" width="1199" height="866"/></clipPath>
<clipPath id="cpA"><rect x="1265" y="139" width="594" height="290"/></clipPath>
<clipPath id="cpB"><rect x="1265" y="431" width="594" height="290"/></clipPath>
<clipPath id="cpC"><rect x="1265" y="723" width="594" height="290"/></clipPath>
<clipPath id="cpMap"><rect x="0" y="0" width="450.4" height="243"/></clipPath>
<filter id="soil" x="0" y="0" width="100%" height="100%" color-interpolation-filters="sRGB">
 <feTurbulence type="fractalNoise" baseFrequency="0.07 0.16" numOctaves="4" seed="3" result="n"/>
 <feColorMatrix in="n" type="matrix" values="0 0 0 0 0  0 0 0 0 0  0 0 0 0 0  0.5 0 0 0 -0.19" result="na"/>
 <feFlood flood-color="#000"/><feComposite in2="na" operator="in" result="dark"/>
 <feComposite in="dark" in2="SourceGraphic" operator="atop"/>
</filter>
<linearGradient id="gFloor" gradientUnits="userSpaceOnUse" x1="0" y1="610" x2="0" y2="870"><stop offset="0" stop-color="#52544b"/><stop offset="0.35" stop-color="#3b3c38"/><stop offset="0.7" stop-color="#282827"/><stop offset="1" stop-color="#161616"/></linearGradient>
<linearGradient id="gBack" gradientUnits="userSpaceOnUse" x1="0" y1="480" x2="0" y2="690"><stop offset="0" stop-color="#86504a"/><stop offset="1" stop-color="#72443c"/></linearGradient>
<linearGradient id="gRight" gradientUnits="userSpaceOnUse" x1="0" y1="470" x2="0" y2="800"><stop offset="0" stop-color="#6e6e66"/><stop offset="0.5" stop-color="#55554f"/><stop offset="1" stop-color="#1e1e1c"/></linearGradient>
<linearGradient id="gLeft" gradientUnits="userSpaceOnUse" x1="0" y1="353" x2="0" y2="870"><stop offset="0" stop-color="#8c8c62"/><stop offset="0.3" stop-color="#828256"/><stop offset="0.6" stop-color="#6e7248"/><stop offset="0.635" stop-color="#356030"/><stop offset="0.8" stop-color="#244a20"/><stop offset="1" stop-color="#0e280c"/></linearGradient>
<linearGradient id="gGrass" gradientUnits="userSpaceOnUse" x1="0" y1="470" x2="0" y2="580"><stop offset="0" stop-color="#5cb04e"/><stop offset="1" stop-color="#62a654"/></linearGradient>
<linearGradient id="gBlue" gradientUnits="userSpaceOnUse" x1="700" y1="522" x2="722" y2="792"><stop offset="0" stop-color="#5aae4e"/><stop offset="0.08" stop-color="#5cae62"/><stop offset="0.17" stop-color="#62b098"/><stop offset="0.3" stop-color="#62b4c4"/><stop offset="0.45" stop-color="#6a9ad6"/><stop offset="0.62" stop-color="#7f80dc"/><stop offset="1" stop-color="#8d8ee0"/></linearGradient>
<linearGradient id="gPurp" gradientUnits="userSpaceOnUse" x1="0" y1="530" x2="0" y2="640"><stop offset="0" stop-color="#68b4b0" stop-opacity="0.2"/><stop offset="0.3" stop-color="#6fa4d4"/><stop offset="0.7" stop-color="#7878d4"/><stop offset="1" stop-color="#7c70d0"/></linearGradient>
<linearGradient id="gSp" gradientUnits="userSpaceOnUse" x1="0" y1="548" x2="0" y2="607"><stop offset="0" stop-color="#62b0a8" stop-opacity="0.3"/><stop offset="0.35" stop-color="#6aaed0"/><stop offset="1" stop-color="#8080dc"/></linearGradient>
<linearGradient id="gOrange" gradientUnits="userSpaceOnUse" x1="700" y1="528" x2="712" y2="672"><stop offset="0" stop-color="#d6b054"/><stop offset="0.3" stop-color="#d9a458"/><stop offset="0.55" stop-color="#d98660"/><stop offset="1" stop-color="#dc7f68"/></linearGradient>

<linearGradient id="gSideBg" gradientUnits="userSpaceOnUse" x1="0" y1="164" x2="0" y2="405"><stop offset="0" stop-color="#5f7a52"/><stop offset="0.12" stop-color="#728c66"/><stop offset="0.35" stop-color="#62845a"/><stop offset="0.6" stop-color="#3f6a3a"/><stop offset="0.8" stop-color="#1f4a1e"/><stop offset="1" stop-color="#0b2c0b"/></linearGradient>
<linearGradient id="gSideCur" gradientUnits="userSpaceOnUse" x1="0" y1="164" x2="0" y2="405"><stop offset="0" stop-color="#58a052"/><stop offset="0.22" stop-color="#63b066"/><stop offset="0.36" stop-color="#6cc0a0"/><stop offset="0.48" stop-color="#6cc6c4"/><stop offset="0.58" stop-color="#68a8c4"/><stop offset="0.68" stop-color="#6486bc"/><stop offset="0.8" stop-color="#6a8abc"/><stop offset="1" stop-color="#7aa0c0"/></linearGradient>
<linearGradient id="gSideOr" gradientUnits="userSpaceOnUse" x1="0" y1="240" x2="0" y2="336"><stop offset="0" stop-color="#c8a858"/><stop offset="0.5" stop-color="#d89c5c"/><stop offset="1" stop-color="#e09260"/></linearGradient>
<linearGradient id="gIsoL" gradientUnits="userSpaceOnUse" x1="1402" y1="800" x2="1460" y2="1010"><stop offset="0" stop-color="#8a6a62"/><stop offset="0.25" stop-color="#7a4c46"/><stop offset="0.7" stop-color="#5c3431"/><stop offset="1" stop-color="#3a201e"/></linearGradient>
<linearGradient id="gIsoR" gradientUnits="userSpaceOnUse" x1="1700" y1="870" x2="1660" y2="1012"><stop offset="0" stop-color="#6e8a60"/><stop offset="0.3" stop-color="#4f7048"/><stop offset="0.65" stop-color="#2a4a28"/><stop offset="1" stop-color="#0e260e"/></linearGradient>
<filter id="soil2" x="0" y="0" width="100%" height="100%" color-interpolation-filters="sRGB">
 <feTurbulence type="fractalNoise" baseFrequency="0.05 0.16" numOctaves="4" seed="11" result="n"/>
 <feColorMatrix in="n" type="matrix" values="0 0 0 0 0  0 0 0 0 0  0 0 0 0 0  0.5 0 0 0 -0.19" result="na"/>
 <feFlood flood-color="#000"/><feComposite in2="na" operator="in" result="dark"/>
 <feComposite in="dark" in2="SourceGraphic" operator="atop"/>
</filter>

</defs>
<rect x="55" y="138" width="1209" height="876" fill="#f3f32a"/>
<rect x="60" y="143" width="1199" height="866" fill="#000"/>
<rect x="1264" y="138" width="596" height="876" fill="#fff"/>
<rect x="1265" y="139" width="594" height="290" fill="#000"/>
<rect x="1265" y="431" width="594" height="290" fill="#000"/>
<rect x="1265" y="723" width="594" height="290" fill="#000"/>
<g clip-path="url(#cpMain)">
<g filter="url(#soil)">
<polygon points="187.0,353.0 1056.0,281.0 1064.0,609.5 198.0,681.5" fill="url(#gBack)"/>
<polygon points="198.0,681.5 1064.0,609.5 1131.0,798.0 264.0,870.0" fill="url(#gFloor)"/>
<polygon points="1056.0,281.0 1122.0,471.0 1131.0,798.0 1064.0,609.5" fill="url(#gRight)"/>
</g>
<g filter="url(#soil)"><polygon points="254.5,542.5 1122.0,471.0 1122.5,494.5 1064.0,496.5 1044.0,504.5 1030.0,509.5 990.0,510.5 928.0,512.5 925.0,514.0 785.0,526.0 749.0,527.0 709.0,528.6 667.0,534.0 554.0,547.0 514.0,553.0 506.0,553.0 470.0,557.0 433.0,559.0 403.0,556.0 330.0,561.0 256.0,566.0" fill="url(#gGrass)"/></g>
<line x1="198.0" y1="681.5" x2="1064.0" y2="609.5" stroke="#dcdcdc" stroke-width="1.1"/>
<g filter="url(#soil)">
<polygon points="514.0,553.0 554.0,547.0 667.0,534.0 709.0,528.6 749.0,527.0 785.0,526.0 925.0,514.3 909.4,601.6 875.0,570.0 837.8,626.0 829.3,666.0 816.4,634.6 812.0,641.0 808.0,638.0 804.0,644.0 799.0,646.0 795.0,636.0 779.0,608.8 772.0,600.0 700.0,600.0 645.0,600.0 637.4,672.0 630.3,783.4 573.0,614.5 567.3,596.0 554.4,607.4" fill="url(#gBlue)"/>
<polygon points="514.0,553.0 557.0,547.0 567.3,596.0 554.4,607.4" fill="url(#gSp)"/>
<polygon points="786.3,528.6 789.2,537.2 802.0,585.9 816.4,634.6 812.0,641.0 808.0,638.0 804.0,644.0 799.2,646.0 795.0,636.0 779.0,608.8 772.0,634.6 776.3,608.8 782.0,571.6" fill="url(#gPurp)"/>
<polygon points="667.5,534.4 709.0,528.6 729.0,581.6 749.0,527.0 784.9,526.3 782.0,571.6 776.3,608.8 772.0,634.6 769.0,651.7 762.0,646.0 747.7,634.6 719.0,623.7 690.4,640.3 670.4,657.5 659.0,659.0 640.3,671.8 644.6,594.5 653.2,563.0" fill="url(#gOrange)"/>
</g>
<g filter="url(#soil)"><polygon points="187.0,353.0 254.5,542.5 264.0,870.0 198.0,681.5" fill="url(#gLeft)"/></g>
<g transform="matrix(-1.92940 0.15986 -0.27778 -0.77984 1123.50 470.50)" clip-path="url(#cpMap)"><use href="#map"/></g>
<g filter="url(#b2)" opacity="0.8"><line x1="792" y1="402" x2="821" y2="468" stroke="#4448d8" stroke-width="10" stroke-linecap="round"/><ellipse cx="786" cy="388" rx="22" ry="9" fill="#4040d0"/></g>
<line x1="198.0" y1="681.5" x2="259.0" y2="676.5" stroke="#d8e0c8" stroke-width="1.1" opacity="0.85"/>
<line x1="1064.0" y1="609.5" x2="1131.0" y2="798.0" stroke="#cfcfcf" stroke-width="1.1" opacity="1"/>
<line x1="264.0" y1="870.0" x2="1131.0" y2="798.0" stroke="#d4d4d4" stroke-width="1.1" opacity="1"/>
<line x1="198.0" y1="681.5" x2="264.0" y2="870.0" stroke="#c0d0b8" stroke-width="1.1" opacity="1"/>
<line x1="254.5" y1="542.5" x2="264.0" y2="870.0" stroke="#c4c8bc" stroke-width="1.1" opacity="1"/>
<line x1="1122.0" y1="471.0" x2="1131.0" y2="798.0" stroke="#a8a8a8" stroke-width="1.2" opacity="1"/>
<line x1="254.5" y1="542.5" x2="1122.0" y2="471.0" stroke="#a4ae98" stroke-width="1.5" opacity="1"/>
<line x1="1056.0" y1="281.0" x2="1122.0" y2="471.0" stroke="#a0a89a" stroke-width="1.2" opacity="1"/>
<line x1="187.0" y1="353.0" x2="254.5" y2="542.5" stroke="#d04a14" stroke-width="1" opacity="1"/>
<line x1="163.0" y1="355.5" x2="190.0" y2="353.2" stroke="#40e040" stroke-width="1.4" opacity="1"/>
<line x1="187.0" y1="353.0" x2="198.0" y2="681.5" stroke="#3838d0" stroke-width="1.2" opacity="0.9"/>
</g>
<g clip-path="url(#cpB)">
<g transform="translate(1336.4 454.6)" clip-path="url(#cpMap)"><use href="#map"/></g>
<line x1="1336" y1="697.5" x2="1799" y2="697.5" stroke="#30e030" stroke-width="1.6"/>
<line x1="1787" y1="454" x2="1787" y2="701" stroke="#e02010" stroke-width="1.6"/>
<line x1="1336.4" y1="454.6" x2="1336.4" y2="697" stroke="#b0b0b0" stroke-width="1.2"/>
<line x1="1336" y1="454.8" x2="1787" y2="454.8" stroke="#b0b0b0" stroke-width="1.2"/>
</g>
<g clip-path="url(#cpA)">
<g filter="url(#soil2)">
<rect x="1403" y="164" width="318.5" height="241" fill="url(#gSideBg)"/>
<polygon points="1403.2,176.0 1425.4,171.8 1444.7,167.7 1461.3,174.6 1480.7,170.4 1496.0,173.0 1496.0,189.8 1475.0,191.0 1453.0,188.4 1433.7,185.7 1403.2,188.4" fill="#6cb868"/>
<polygon points="1700.7,176.0 1721.0,174.6 1721.0,187.0 1700.7,188.4" fill="#6cb868"/>
<polygon points="1496.0,164.4 1497.3,195.4 1500.0,250.7 1502.9,295.0 1508.4,317.0 1511.7,321.3 1520.8,317.0 1530.5,360.0 1541.6,342.0 1552.7,331.0 1561.0,333.7 1568.0,338.0 1577.6,317.0 1584.5,333.7 1600.0,325.0 1612.0,335.0 1626.0,314.4 1630.2,400.0 1635.7,333.7 1639.9,303.3 1646.8,306.0 1660.6,310.0 1674.5,308.8 1682.8,304.7 1685.5,278.4 1691.0,223.0 1692.4,195.4 1700.7,176.0 1700.7,164.4" fill="url(#gSideCur)"/>
<polygon points="1576.2,241.0 1591.4,243.0 1605.3,248.0 1613.6,264.5 1620.5,281.0 1625.2,284.0 1624.6,314.4 1616.3,320.0 1612.2,335.0 1606.6,328.0 1599.7,325.0 1591.4,328.0 1585.9,334.3 1581.7,320.0 1579.0,306.0 1575.4,295.0 1577.6,264.5" fill="url(#gSideOr)"/>
<polygon points="1646.0,273.0 1649.0,272.0 1649.6,298.0 1644.0,300.0" fill="#d09a60"/>
</g>
<line x1="1399" y1="163" x2="1722" y2="163" stroke="#e02020" stroke-width="2"/>
<line x1="1403" y1="164" x2="1403" y2="405" stroke="#1010c8" stroke-width="2"/>
<line x1="1721" y1="164" x2="1721" y2="406" stroke="#a8b0a8" stroke-width="2"/>
<line x1="1403" y1="405" x2="1722" y2="405" stroke="#a8b0a8" stroke-width="2"/>
</g>
<g clip-path="url(#cpC)">
<g filter="url(#soil2)">
<polygon points="1402.4,791.6 1609.3,938.4 1609.3,1023.1 1402.4,876.3" fill="url(#gIsoL)"/>
<polygon points="1609.3,938.4 1721.0,858.6 1721.0,943.3 1609.3,1023.1" fill="url(#gIsoR)"/>
</g>
<g transform="matrix(0.45937 0.32593 -0.45967 0.32840 1514.10 711.80)" clip-path="url(#cpMap)"><use href="#map"/></g>
<line x1="1402.4" y1="876.3" x2="1458.8" y2="836.0" stroke="#c8c0b8" stroke-width="0.9" opacity="0.8"/>
<line x1="1721.0" y1="943.3" x2="1661.0" y2="900.7" stroke="#c8d0c0" stroke-width="0.9" opacity="0.8"/>
<line x1="1402.4" y1="791.6" x2="1402.4" y2="876.3" stroke="#b0a8a0" stroke-width="1" opacity="1"/>
<line x1="1402.4" y1="876.3" x2="1609.3" y2="1023.1" stroke="#c8c8c0" stroke-width="1" opacity="1"/>
<line x1="1721.0" y1="858.6" x2="1721.0" y2="943.3" stroke="#a8b0a0" stroke-width="1" opacity="1"/>
<line x1="1721.0" y1="943.3" x2="1609.3" y2="1023.1" stroke="#c0c8b8" stroke-width="1" opacity="1"/>
<line x1="1402.4" y1="791.6" x2="1609.3" y2="938.4" stroke="#38e038" stroke-width="1.3" opacity="1"/>
<line x1="1609.3" y1="938.4" x2="1721.0" y2="858.6" stroke="#e04010" stroke-width="1.5" opacity="1"/>
<line x1="1609.3" y1="938.4" x2="1609.3" y2="1023.1" stroke="#1818e0" stroke-width="2.2" opacity="1"/>
</g>
</svg>
</div>
</body>
</html>
